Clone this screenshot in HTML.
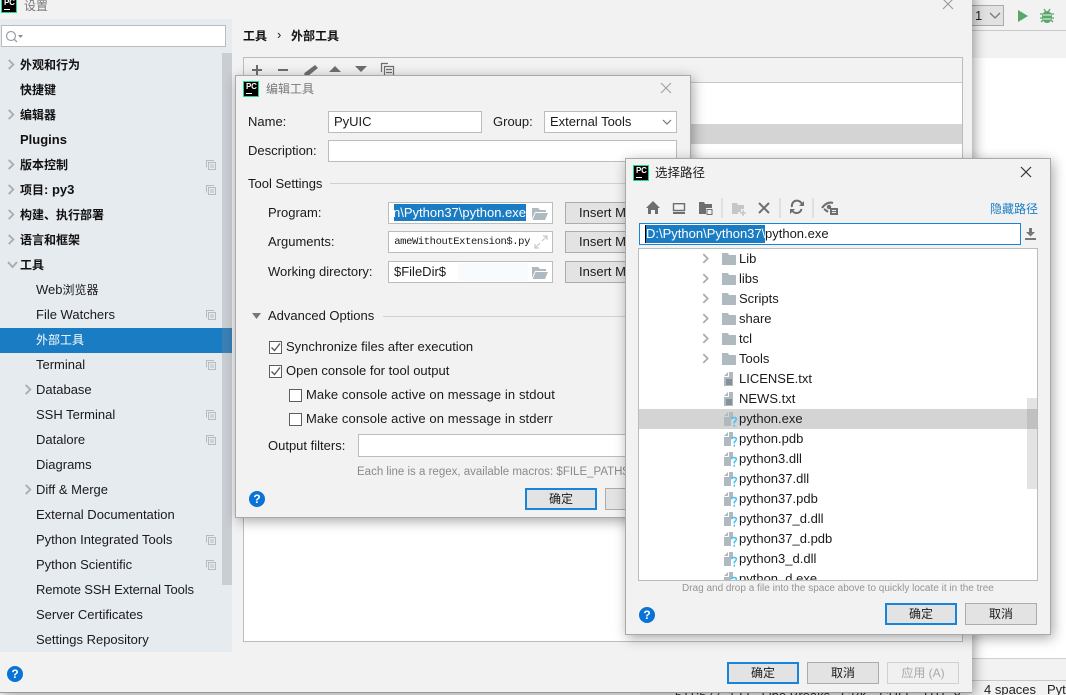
<!DOCTYPE html>
<html><head><meta charset="utf-8">
<style>
html,body{margin:0;padding:0;width:1066px;height:695px;overflow:hidden;background:#fff}
*{box-sizing:border-box}
body{position:relative;font:13px/18px "Liberation Sans","Noto Sans CJK SC",sans-serif;color:#1a1a1a}
.a,.t,.b,.i,svg.s{position:absolute}
.t{white-space:nowrap;height:18px;line-height:18px;margin-top:1px}
.c{font-size:12px}
.dlg{position:absolute;background:#f2f2f2;border:1px solid #a9a9a9;box-shadow:2px 3px 12px rgba(0,0,0,.35);overflow:hidden}
.i{background:#fff;border:1px solid #bcbcbc;white-space:nowrap;overflow:hidden;line-height:20px;padding-left:5px}
.b{background:#e3e3e3;border:1px solid #ababab;text-align:center;line-height:20px;height:22px;width:72px;font-size:12px;white-space:nowrap}
.b.p{border:2px solid #1a84d8;line-height:18px}
.b.d{color:#a8a8a8;border-color:#d0d0d0;background:#f0f0f0}
.pc{position:absolute;width:16px;height:16px;background:#000;border:1px solid #1fd68a;color:#fff;font:bold 8px/8px "Liberation Sans",sans-serif;padding-left:2px;padding-top:1px;letter-spacing:-.2px}
.pc:after{content:"";position:absolute;left:2px;bottom:2px;width:6px;height:1px;background:#fff}
.hp{position:absolute;width:16px;height:16px;border-radius:50%;background:#0a74d6;color:#fff;font:bold 12px/16px "Liberation Sans",sans-serif;text-align:center}
.bd{font-weight:bold;color:#111}
.cb{position:absolute;width:13px;height:13px;border:1px solid #5e5e5e;background:#fff}
svg.k{margin-top:1px}
</style></head><body>
<svg width="0" height="0" style="position:absolute"><defs>
<symbol id="ar" viewBox="0 0 8 12"><path d="M1.500 1 L6.500 6 L1.500 11" fill="none" stroke="#a8adb2" stroke-width="2"/></symbol>
<symbol id="cp" viewBox="0 0 10 10"><path d="M.5 7.500V.5H8M2.500 9.500V2.500H9.500V9.500ZM4 5H8M4 7H8" fill="none" stroke="#b3bcc3" stroke-width="1"/></symbol>
<symbol id="fo" viewBox="0 0 14 12"><path d="M0 0H6L7 2H14V12H0Z" fill="#aeb9c0"/></symbol>
<symbol id="fl" viewBox="0 0 10 14"><path d="M0 4L4 0V4Z" fill="#aeb9c0"/><path d="M5 0H9V14H0V5H5Z" fill="#aeb9c0"/><path d="M2 8H8M2 10H8M2 12H8" stroke="#5f676c" stroke-width="1"/></symbol>
<symbol id="fq" viewBox="0 0 13 15"><path d="M0 4L4 0V4Z" fill="#aeb9c0"/><path d="M5 0H9V5Q7 6 7 9V14H0V5H5Z" fill="#aeb9c0"/><path d="M7.500 7Q8 5.500 10 5.500Q12.500 5.500 12.300 7.500Q12 9 10.300 10V11.500" fill="none" stroke="#48bdf0" stroke-width="1.500"/><path d="M9.500 12.800h1.600v1.800h-1.600z" fill="#48bdf0"/></symbol>
<symbol id="op" viewBox="0 0 16 13"><path d="M0 1H6L8 3H14V5H3L0 12Z" fill="#aeb9c0"/><path d="M3.500 6H16L13 13H0.700Z" fill="#aeb9c0"/></symbol>
</defs></svg>

<!-- background IDE -->
<div class="a" style="left:972px;top:0;width:94px;height:58px;background:#f2f2f2"></div>
<div class="a" style="left:972px;top:30px;width:94px;height:1px;background:#c9c9c9"></div>
<div class="a" style="left:960px;top:5px;width:44px;height:21px;background:#e2e2e2;border:1px solid #ababab"></div>
<div class="t" style="left:975px;top:6px;color:#222">1</div>
<svg class="s" style="left:989px;top:12px" width="12" height="8"><path d="M1 1L6 6L11 1" fill="none" stroke="#777" stroke-width="1.300"/></svg>
<svg class="s" style="left:1017px;top:9px" width="12" height="14"><path d="M1 1L11 7L1 13Z" fill="#59a869"/></svg>
<svg class="s" style="left:1040px;top:8px" width="14" height="16"><ellipse cx="7" cy="9" rx="5" ry="6" fill="#59a869"/><path d="M4 1L6 4M10 1L8 4M0 6H14M0 10H14M1 14L3 12M13 14L11 12" stroke="#59a869" stroke-width="1.300"/><path d="M3 7H11M3 11H11" stroke="#f2f2f2"/></svg>
<div class="a" style="left:972px;top:658px;width:94px;height:37px;background:#f2f2f2;border-top:1px solid #cfcfcf"></div>
<div class="a" style="left:640px;top:680px;width:426px;height:15px;background:#f2f2f2;border-top:1px solid #c9c9c9"></div>
<div class="t" style="left:984px;top:680px;color:#222">4 spaces</div>
<div class="t" style="left:1047px;top:680px;color:#222">Pyt</div>

<!-- settings dialog -->
<div class="a" style="left:0;top:-10px;width:972px;height:703px;background:#f2f2f2;box-shadow:2px 2px 12px rgba(0,0,0,.4);border-bottom:1px solid #999"></div>
<div class="a" style="left:675px;top:693px;width:290px;height:2px;overflow:hidden"><div style="margin-top:-6px;white-space:nowrap;color:#222">511:577 &nbsp;1 LF &nbsp;Line Breaks &nbsp; GBK &nbsp; CRLF &nbsp; UTF-8</div></div>
<div class="pc" style="left:1px;top:-3px;">PC</div>
<div class="t c" style="left:24px;top:-4px;color:#777">设置</div>
<svg class="s" style="left:942px;top:-2px" width="12" height="12"><path d="M1 1L11 11M11 1L1 11" stroke="#9a9a9a" stroke-width="1.100"/></svg>

<div class="a" style="left:0;top:19px;width:232px;height:633px;background:#e6ebf0"></div>
<div class="a" style="left:1px;top:25px;width:225px;height:22px;background:#fff;border:1px solid #bcbcbc"></div>
<svg class="s" style="left:5px;top:30px" width="18" height="13"><circle cx="6" cy="6" r="4.500" fill="none" stroke="#9aa0a5" stroke-width="1.200"/><path d="M9.500 9.500L12 12" stroke="#9aa0a5" stroke-width="1.300"/><path d="M13 5H18L15.500 8Z" fill="#8c8c8c"/></svg>
<div class="a" style="left:222px;top:53px;width:10px;height:532px;background:#c9ced3"></div>
<div class="a" style="left:0;top:328px;width:232px;height:25px;background:#1a7dc4"></div>
<div class="a" style="left:222px;top:328px;width:10px;height:25px;background:#3a81b5"></div>

<div class="t bd c" style="left:20px;top:55px">外观和行为</div>
<div class="t bd c" style="left:20px;top:80px">快捷键</div>
<div class="t bd c" style="left:20px;top:105px">编辑器</div>
<div class="t bd" style="left:20px;top:130px">Plugins</div>
<div class="t bd c" style="left:20px;top:155px">版本控制</div>
<div class="t bd" style="left:20px;top:180px"><span class="c">项目</span>: py3</div>
<div class="t bd c" style="left:20px;top:205px">构建、执行部署</div>
<div class="t bd c" style="left:20px;top:230px">语言和框架</div>
<div class="t bd c" style="left:20px;top:255px">工具</div>
<div class="t" style="left:36px;top:280px">Web<span class="c">浏览器</span></div>
<div class="t" style="left:36px;top:305px">File Watchers</div>
<div class="t c" style="left:36px;top:330px;color:#fff">外部工具</div>
<div class="t" style="left:36px;top:355px">Terminal</div>
<div class="t" style="left:36px;top:380px">Database</div>
<div class="t" style="left:36px;top:405px">SSH Terminal</div>
<div class="t" style="left:36px;top:430px">Datalore</div>
<div class="t" style="left:36px;top:455px">Diagrams</div>
<div class="t" style="left:36px;top:480px">Diff &amp; Merge</div>
<div class="t" style="left:36px;top:505px">External Documentation</div>
<div class="t" style="left:36px;top:530px">Python Integrated Tools</div>
<div class="t" style="left:36px;top:555px">Python Scientific</div>
<div class="t" style="left:36px;top:580px;letter-spacing:-.12px">Remote SSH External Tools</div>
<div class="t" style="left:36px;top:605px">Server Certificates</div>
<div class="t" style="left:36px;top:630px">Settings Repository</div>

<svg class="s" style="left:7px;top:59px" width="8" height="11"><use href="#ar"/></svg>
<svg class="s" style="left:7px;top:109px" width="8" height="11"><use href="#ar"/></svg>
<svg class="s" style="left:7px;top:159px" width="8" height="11"><use href="#ar"/></svg>
<svg class="s" style="left:7px;top:184px" width="8" height="11"><use href="#ar"/></svg>
<svg class="s" style="left:7px;top:209px" width="8" height="11"><use href="#ar"/></svg>
<svg class="s" style="left:7px;top:234px" width="8" height="11"><use href="#ar"/></svg>
<svg class="s" style="left:7px;top:261px" width="11" height="8"><path d="M1 1L5.500 6L10 1" fill="none" stroke="#a8adb2" stroke-width="2"/></svg>
<svg class="s" style="left:24px;top:384px" width="8" height="11"><use href="#ar"/></svg>
<svg class="s" style="left:24px;top:484px" width="8" height="11"><use href="#ar"/></svg>
<svg class="s k" style="left:206px;top:159px" width="10" height="10"><use href="#cp"/></svg>
<svg class="s k" style="left:206px;top:184px" width="10" height="10"><use href="#cp"/></svg>
<svg class="s k" style="left:206px;top:309px" width="10" height="10"><use href="#cp"/></svg>
<svg class="s k" style="left:206px;top:359px" width="10" height="10"><use href="#cp"/></svg>
<svg class="s k" style="left:206px;top:409px" width="10" height="10"><use href="#cp"/></svg>
<svg class="s k" style="left:206px;top:434px" width="10" height="10"><use href="#cp"/></svg>
<svg class="s k" style="left:206px;top:534px" width="10" height="10"><use href="#cp"/></svg>
<svg class="s k" style="left:206px;top:559px" width="10" height="10"><use href="#cp"/></svg>
<div class="hp" style="left:7px;top:666px">?</div>

<div class="t bd c" style="left:243px;top:26px">工具</div>
<div class="t" style="left:277px;top:25px">›</div>
<div class="t bd c" style="left:291px;top:26px">外部工具</div>

<div class="a" style="left:243px;top:57px;width:720px;height:585px;background:#fff;border:1px solid #bcbcbc"></div>
<div class="a" style="left:244px;top:58px;width:718px;height:25px;background:#f2f2f2;border-bottom:1px solid #c9c9c9"></div>
<div class="a" style="left:244px;top:124px;width:718px;height:20px;background:#d4d4d4"></div>
<svg class="s" style="left:250px;top:62px" width="150" height="16"><path d="M2 8H12M7 3V13M28 8H38" stroke="#6e6e6e" stroke-width="2"/><path d="M65 3L68 6L58 14L54 15L54.500 11Z" fill="#6e6e6e"/><path d="M79 10L85 4L91 10ZM105 4H117L111 10Z" fill="#6e6e6e"/><path d="M131.500 10V1.500H138M134.500 13.500V4.500H143.500V13.500ZM136 7.500H142M136 10.500H142" fill="none" stroke="#6e6e6e" stroke-width="1.200"/></svg>
<div class="b p" style="left:727px;top:662px">确定</div>
<div class="b" style="left:807px;top:662px">取消</div>
<div class="b d" style="left:887px;top:662px">应用 (A)</div>

<!-- edit tool dialog -->
<div class="dlg" style="left:235px;top:75px;width:456px;height:443px"></div>
<div class="pc" style="left:243px;top:81px">PC</div>
<div class="t c" style="left:266px;top:79px;color:#787878">编辑工具</div>
<svg class="s" style="left:660px;top:82px" width="12" height="12"><path d="M1 1L11 11M11 1L1 11" stroke="#a0a0a0" stroke-width="1.100"/></svg>
<div class="t" style="left:248px;top:112px">Name:</div>
<div class="i" style="left:328px;top:111px;width:154px;height:22px">PyUIC</div>
<div class="t" style="left:493px;top:112px">Group:</div>
<div class="i" style="left:544px;top:111px;width:133px;height:22px">External Tools</div>
<svg class="s" style="left:662px;top:119px" width="10" height="7"><path d="M1 1L5 5L9 1" fill="none" stroke="#777" stroke-width="1.200"/></svg>
<div class="t" style="left:248px;top:141px">Description:</div>
<div class="i" style="left:328px;top:140px;width:349px;height:22px"></div>
<div class="t" style="left:248px;top:174px">Tool Settings</div>
<div class="a" style="left:330px;top:183px;width:350px;height:1px;background:#d0d0d0"></div>
<div class="t" style="left:268px;top:203px">Program:</div>
<div class="i" style="left:388px;top:202px;width:165px;height:22px;padding:0"></div>
<div class="t" style="left:394px;top:203px;height:17px;line-height:17px;width:132px;overflow:hidden;background:#1a7dc4;color:#fff;text-align:right;direction:rtl"><bdi>n\Python37\python.exe</bdi></div>
<svg class="s" style="left:532px;top:207px" width="16" height="13"><use href="#op"/></svg>
<div class="b" style="left:565px;top:202px;text-align:left;padding-left:13px;font-size:13px;width:72px">Insert Macros</div>
<div class="t" style="left:268px;top:232px">Arguments:</div>
<div class="i" style="left:388px;top:231px;width:165px;height:22px;padding:0"></div>
<div class="t" style="left:394px;top:232px;width:136px;overflow:hidden;font:10.500px/18px 'Liberation Mono',monospace;text-align:right;direction:rtl;letter-spacing:-.4px"><bdi>ameWithoutExtension$.py</bdi></div>
<svg class="s" style="left:534px;top:235px" width="14" height="14"><path d="M8 6L13 1M9 1H13V5M6 8L1 13M5 13H1V9" fill="none" stroke="#c4c9cd" stroke-width="1.200"/></svg>
<div class="b" style="left:565px;top:231px;text-align:left;padding-left:13px;font-size:13px;width:72px">Insert Macros</div>
<div class="t" style="left:268px;top:262px">Working directory:</div>
<div class="i" style="left:388px;top:261px;width:165px;height:22px">$FileDir$</div>
<div class="a" style="left:458px;top:263px;width:70px;height:18px;background:#f8fbfe"></div>
<svg class="s" style="left:532px;top:266px" width="16" height="13"><use href="#op"/></svg>
<div class="b" style="left:565px;top:261px;text-align:left;padding-left:13px;font-size:13px;width:72px">Insert Macros</div>
<svg class="s" style="left:252px;top:313px" width="9" height="6"><path d="M0 0H9L4.500 6Z" fill="#777"/></svg>
<div class="t" style="left:268px;top:306px">Advanced Options</div>
<div class="a" style="left:383px;top:316px;width:300px;height:1px;background:#d0d0d0"></div>
<div class="cb" style="left:269px;top:341px"></div>
<svg class="s" style="left:270px;top:342px" width="11" height="11"><path d="M1.500 5.500L4.500 8.500L10 1.500" fill="none" stroke="#555" stroke-width="1.300"/></svg>
<div class="t" style="left:286px;top:337px">Synchronize files after execution</div>
<div class="cb" style="left:269px;top:365px"></div>
<svg class="s" style="left:270px;top:366px" width="11" height="11"><path d="M1.500 5.500L4.500 8.500L10 1.500" fill="none" stroke="#555" stroke-width="1.300"/></svg>
<div class="t" style="left:286px;top:361px">Open console for tool output</div>
<div class="cb" style="left:289px;top:389px"></div>
<div class="t" style="left:306px;top:385px;letter-spacing:.1px">Make console active on message in stdout</div>
<div class="cb" style="left:289px;top:413px"></div>
<div class="t" style="left:306px;top:409px;letter-spacing:.1px">Make console active on message in stderr</div>
<div class="t" style="left:268px;top:436px">Output filters:</div>
<div class="i" style="left:358px;top:434px;width:320px;height:23px"></div>
<div class="t" style="left:357px;top:462px;font-size:11.500px;color:#8a8a8a;width:270px;overflow:hidden">Each line is a regex, available macros: $FILE_PATH$, $LINE$</div>
<div class="hp" style="left:249px;top:491px">?</div>
<div class="b p" style="left:525px;top:488px">确定</div>
<div class="b" style="left:605px;top:488px"></div>

<!-- file chooser -->
<div class="dlg" style="left:625px;top:158px;width:426px;height:477px"></div>
<div class="pc" style="left:633px;top:165px">PC</div>
<div class="t" style="left:655px;top:163px;color:#222;font-size:12.500px">选择路径</div>
<svg class="s" style="left:1020px;top:166px" width="12" height="12"><path d="M1 1L11 11M11 1L1 11" stroke="#333" stroke-width="1.200"/></svg>
<svg class="s" style="left:645px;top:198px" width="200" height="20"><g transform="translate(0,2)">
<path d="M8 1L15 8H13V14H10V10H6V14H3V8H1Z" fill="#6e6e6e"/>
<path d="M28.500 3.700H39.500V10.500H28.500Z" fill="none" stroke="#6e6e6e" stroke-width="1.400"/><path d="M28 12H40V14H28Z" fill="#6e6e6e"/>
<path d="M54 2H59L60 4H67V8H61V14H54Z" fill="#6e6e6e"/><path d="M62 9.500H67V14.500H62Z" fill="none" stroke="#6e6e6e"/>
<path d="M87 3H92L93 5H99V9H96V12H93V14H87Z" fill="#c2c7cb"/><path d="M95 13H101M98 10V16" stroke="#c2c7cb" stroke-width="1.500"/>
<path d="M114 3L124 13M124 3L114 13" stroke="#6e6e6e" stroke-width="2"/>
<path d="M157 4.500A5 5 0 0 0 147 7M147 10A5 5 0 0 0 156.500 9" fill="none" stroke="#6e6e6e" stroke-width="2"/><path d="M154 6H159V1ZM145 9H150L145 14Z" fill="#6e6e6e"/>
<path d="M177 8Q182 1 188 3M179 9Q182 11 183 12" fill="none" stroke="#6e6e6e" stroke-width="2"/><circle cx="184" cy="7" r="2.200" fill="#6e6e6e"/><path d="M185 8H193V15H185Z" fill="#6e6e6e"/><path d="M187 10.500H191M187 12.500H191" stroke="#f2f2f2"/>
</g><path d="M77 0V20M135 0V20M168 0V20" stroke="#cfcfcf"/></svg>
<div class="t c" style="left:990px;top:199px;color:#1a7dc4">隐藏路径</div>
<div class="a" style="left:639px;top:223px;width:382px;height:22px;background:#fff;border:1px solid #1a84d8"></div>
<div class="a" style="left:645px;top:225px;width:120px;height:18px;background:#1a7dc4;border-left:1px solid #000"></div>
<div class="t" style="left:646px;top:224px;color:#fff">D:\Python\Python37\</div>
<div class="t" style="left:765px;top:224px">python.exe</div>
<svg class="s" style="left:1024px;top:227px" width="13" height="13"><path d="M5 1H8V5H11L6.500 9.500L2 5H5ZM1 11H12V13H1Z" fill="#777"/></svg>

<div class="a" style="left:638px;top:248px;width:400px;height:333px;background:#fff;border:1px solid #bcbcbc;overflow:hidden">
<div class="a" style="left:0;top:160px;width:398px;height:20px;background:#d4d4d4"></div>
<div class="a" style="left:388px;top:149px;width:10px;height:91px;background:#e3e3e3"></div>
<div class="a" style="left:388px;top:160px;width:10px;height:20px;background:#c0c0c0"></div>
<div class="t" style="left:100px;top:0">Lib</div>
<div class="t" style="left:100px;top:20px">libs</div>
<div class="t" style="left:100px;top:40px">Scripts</div>
<div class="t" style="left:100px;top:60px">share</div>
<div class="t" style="left:100px;top:80px">tcl</div>
<div class="t" style="left:100px;top:100px">Tools</div>
<div class="t" style="left:100px;top:120px">LICENSE.txt</div>
<div class="t" style="left:100px;top:140px">NEWS.txt</div>
<div class="t" style="left:100px;top:160px">python.exe</div>
<div class="t" style="left:100px;top:180px">python.pdb</div>
<div class="t" style="left:100px;top:200px">python3.dll</div>
<div class="t" style="left:100px;top:220px">python37.dll</div>
<div class="t" style="left:100px;top:240px">python37.pdb</div>
<div class="t" style="left:100px;top:260px">python37_d.dll</div>
<div class="t" style="left:100px;top:280px">python37_d.pdb</div>
<div class="t" style="left:100px;top:300px">python3_d.dll</div>
<div class="t" style="left:100px;top:320px">python_d.exe</div>
<svg class="s" style="left:63px;top:4px" width="7" height="11"><use href="#ar"/></svg>
<svg class="s" style="left:63px;top:24px" width="7" height="11"><use href="#ar"/></svg>
<svg class="s" style="left:63px;top:44px" width="7" height="11"><use href="#ar"/></svg>
<svg class="s" style="left:63px;top:64px" width="7" height="11"><use href="#ar"/></svg>
<svg class="s" style="left:63px;top:84px" width="7" height="11"><use href="#ar"/></svg>
<svg class="s" style="left:63px;top:104px" width="7" height="11"><use href="#ar"/></svg>
<svg class="s" style="left:83px;top:4px" width="14" height="12"><use href="#fo"/></svg>
<svg class="s" style="left:83px;top:24px" width="14" height="12"><use href="#fo"/></svg>
<svg class="s" style="left:83px;top:44px" width="14" height="12"><use href="#fo"/></svg>
<svg class="s" style="left:83px;top:64px" width="14" height="12"><use href="#fo"/></svg>
<svg class="s" style="left:83px;top:84px" width="14" height="12"><use href="#fo"/></svg>
<svg class="s" style="left:83px;top:104px" width="14" height="12"><use href="#fo"/></svg>
<svg class="s" style="left:85px;top:123px" width="10" height="14"><use href="#fl"/></svg>
<svg class="s" style="left:85px;top:143px" width="10" height="14"><use href="#fl"/></svg>
<svg class="s" style="left:85px;top:163px" width="13" height="15"><use href="#fq"/></svg>
<svg class="s" style="left:85px;top:183px" width="13" height="15"><use href="#fq"/></svg>
<svg class="s" style="left:85px;top:203px" width="13" height="15"><use href="#fq"/></svg>
<svg class="s" style="left:85px;top:223px" width="13" height="15"><use href="#fq"/></svg>
<svg class="s" style="left:85px;top:243px" width="13" height="15"><use href="#fq"/></svg>
<svg class="s" style="left:85px;top:263px" width="13" height="15"><use href="#fq"/></svg>
<svg class="s" style="left:85px;top:283px" width="13" height="15"><use href="#fq"/></svg>
<svg class="s" style="left:85px;top:303px" width="13" height="15"><use href="#fq"/></svg>
<svg class="s" style="left:85px;top:323px" width="13" height="15"><use href="#fq"/></svg>
</div>
<div class="t" style="left:682px;top:579px;font-size:10px;color:#959595">Drag and drop a file into the space above to quickly locate it in the tree</div>
<div class="hp" style="left:639px;top:607px">?</div>
<div class="b p" style="left:885px;top:603px">确定</div>
<div class="b" style="left:965px;top:603px">取消</div>
</body></html>
